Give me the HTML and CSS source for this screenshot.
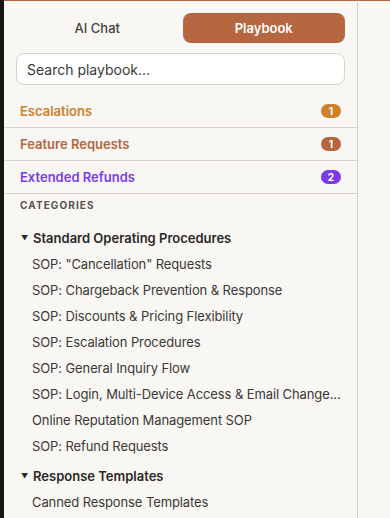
FILE: index.html
```html
<!DOCTYPE html>
<html lang="en">
<head>
    <meta charset="UTF-8">
    <meta name="viewport" content="width=device-width, initial-scale=1.0">
    <title>Playbook</title>
    <link rel="stylesheet" href="styles.css">
</head>
<body>

    <div class="app">
        <div class="edge"></div>

        <aside class="sidebar">
            <div class="tabs">
                <button class="tab">AI Chat</button>
                <button class="tab active">Playbook</button>
            </div>

            <input type="text" class="search" placeholder="Search playbook...">

            <div class="queues">
                <a href="#" class="queue escalations">Escalations <span class="badge">1</span></a>
                <a href="#" class="queue features">Feature Requests <span class="badge">1</span></a>
                <a href="#" class="queue refunds">Extended Refunds <span class="badge">2</span></a>
            </div>

            <div class="section-label">Categories</div>

            <div class="group">
                <div class="group-title"><span class="caret">▼</span>Standard Operating Procedures</div>
                <a href="#" class="item">SOP: "Cancellation" Requests</a>
                <a href="#" class="item">SOP: Chargeback Prevention &amp; Response</a>
                <a href="#" class="item">SOP: Discounts &amp; Pricing Flexibility</a>
                <a href="#" class="item">SOP: Escalation Procedures</a>
                <a href="#" class="item">SOP: General Inquiry Flow</a>
                <a href="#" class="item">SOP: Login, Multi-Device Access &amp; Email Change...</a>
                <a href="#" class="item">Online Reputation Management SOP</a>
                <a href="#" class="item">SOP: Refund Requests</a>
            </div>

            <div class="group">
                <div class="group-title"><span class="caret">▼</span>Response Templates</div>
                <a href="#" class="item">Canned Response Templates</a>
            </div>
        </aside>

        <main class="pane"></main>
    </div>

</body>
</html>
```

FILE: styles.css
```css
body {
    font-family: Inter, "Noto Sans", sans-serif;
    background-color: #f8f7f3;
    margin: 0;
    padding: 0;
    height: 100vh;
    overflow: hidden;
}

.app {
    display: flex;
    height: 100vh;
}

.edge {
    width: 4px;
    background: #161616;
    flex-shrink: 0;
}

.sidebar {
    width: 353px;
    flex-shrink: 0;
    border-top: 1px solid #b5663f;
    border-right: 1px solid #d6d1c8;
    background: #f8f7f3;
    overflow: hidden;
}

.pane {
    flex: 1;
    border-top: 1px solid #b5663f;
    background: #f8f7f3;
}

.tabs {
    display: flex;
    gap: 4px;
    margin: 12px 12px 0;
}

.tab {
    flex: 1;
    height: 30px;
    border: none;
    border-radius: 8px;
    background: transparent;
    font-family: inherit;
    font-size: 13px;
    font-weight: 500;
    color: #46423d;
    cursor: pointer;
}

.tab.active {
    background: #b5673f;
    color: white;
    font-weight: 600;
}

.search {
    display: block;
    box-sizing: border-box;
    width: 329px;
    height: 32px;
    margin: 10px 12px 0;
    padding: 0 10px;
    border: 1px solid #d9d3c8;
    border-radius: 8px;
    background: white;
    font-family: inherit;
    font-size: 14px;
    color: #2b2825;
    outline: none;
}

.search::placeholder {
    color: #3b3835;
}

.queues {
    margin-top: 10px;
}

.queue {
    display: flex;
    justify-content: space-between;
    align-items: center;
    height: 32px;
    padding: 0 16px;
    border-bottom: 1px solid #d9d4cb;
    font-size: 13px;
    font-weight: 600;
    text-decoration: none;
}

.badge {
    min-width: 20px;
    height: 14px;
    line-height: 14px;
    border-radius: 7px;
    text-align: center;
    font-size: 10px;
    font-weight: 700;
    color: white;
}

.escalations { color: #d0802b; }
.escalations .badge { background: #d0802b; }

.features { color: #b5663f; }
.features .badge { background: #b5663f; }

.refunds { color: #7c3aed; }
.refunds .badge { background: #7c3aed; }

.section-label {
    padding: 4px 16px 9px;
    line-height: 14px;
    font-size: 10px;
    font-weight: 700;
    letter-spacing: 1.1px;
    text-transform: uppercase;
    color: #57534d;
}

.group {
    margin-top: 4px;
}

.group-title {
    display: flex;
    align-items: center;
    height: 26px;
    padding-left: 17px;
    font-size: 13px;
    font-weight: 600;
    color: #2b2825;
}

.caret {
    width: 12px;
    font-size: 7px;
    color: #2b2825;
}

.item {
    display: block;
    height: 26px;
    line-height: 26px;
    padding: 0 12px 0 28px;
    font-size: 13px;
    letter-spacing: -0.1px;
    color: #3b3835;
    text-decoration: none;
    white-space: nowrap;
    overflow: hidden;
}
```
